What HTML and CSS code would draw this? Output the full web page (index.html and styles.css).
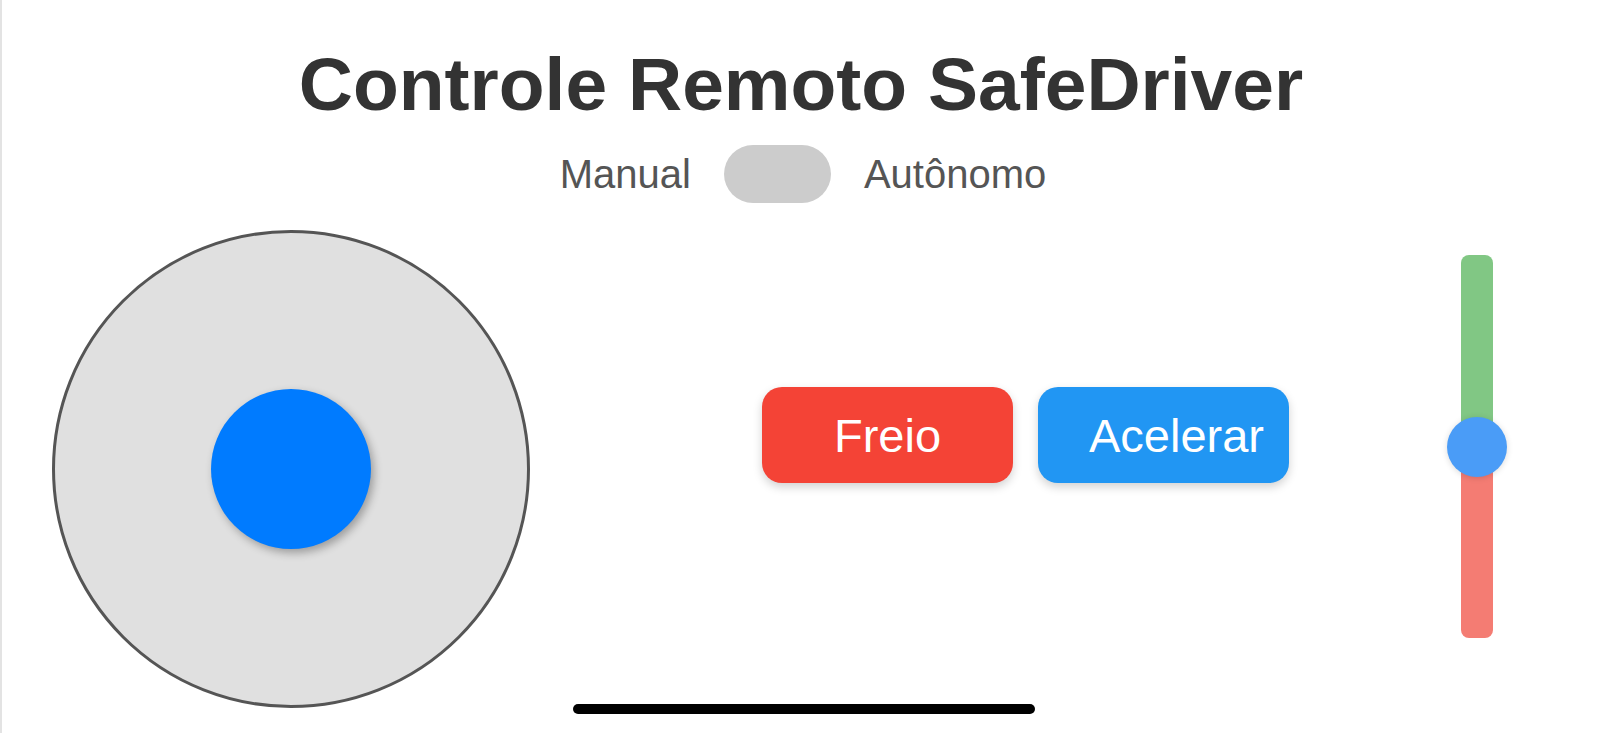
FILE: index.html
```html
<!DOCTYPE html>
<html lang="pt">
<head>
<meta charset="utf-8">
<title>Controle Remoto SafeDriver</title>
<link rel="stylesheet" href="styles.css">
</head>
<body>
<div class="app">
  <h1 class="title">Controle Remoto SafeDriver</h1>
  <div class="mode-row">
    <span class="mode-label">Manual</span>
    <div class="switch"></div>
    <span class="mode-label">Autônomo</span>
  </div>
  <div class="controls">
    <div class="joystick">
      <div class="knob"></div>
    </div>
    <div class="buttons">
      <button class="btn btn-brake">Freio</button>
      <button class="btn btn-accel">Acelerar</button>
    </div>
    <div class="slider">
      <div class="slider-thumb"></div>
    </div>
  </div>
  <div class="home-indicator"></div>
</div>
</body>
</html>
```
FILE: styles.css
```css
html, body {
  margin: 0;
  padding: 0;
  background: #ffffff;
}

body {
  font-family: "Liberation Sans", Arial, sans-serif;
  overflow: hidden;
}

.app {
  position: relative;
  width: 1600px;
  height: 733px;
  box-sizing: border-box;
  border-left: 2px solid #e3e3e3;
  display: flex;
  flex-direction: column;
  align-items: stretch;
}

.title {
  margin: 41px 0 0 0;
  font-size: 75px;
  font-weight: bold;
  line-height: 86px;
  color: #333333;
  text-align: center;
}

.mode-row {
  margin-top: 18px;
  display: flex;
  justify-content: center;
  align-items: center;
  gap: 33px;
  padding-left: 4px;
}

.mode-label {
  font-size: 40px;
  line-height: 46px;
  color: #555555;
}

.switch {
  width: 107px;
  height: 58px;
  border-radius: 29px;
  background: #cccccc;
}

.controls {
  margin-top: 27px;
  display: flex;
  align-items: flex-start;
  padding-left: 50px;
}

.joystick {
  width: 478px;
  height: 478px;
  box-sizing: border-box;
  border: 3px solid #555555;
  border-radius: 50%;
  background: #e0e0e0;
  display: flex;
  align-items: center;
  justify-content: center;
}

.knob {
  width: 160px;
  height: 160px;
  border-radius: 50%;
  background: #007bff;
  box-shadow: 3px 4px 8px rgba(0, 0, 0, 0.3);
}

.buttons {
  margin-left: 232px;
  margin-top: 157px;
  display: flex;
  gap: 25px;
}

.btn {
  width: 251px;
  height: 96px;
  box-sizing: border-box;
  padding: 0 51px;
  border: none;
  border-radius: 20px;
  font-family: "Liberation Sans", Arial, sans-serif;
  font-size: 47px;
  color: #ffffff;
  text-align: center;
  white-space: nowrap;
  box-shadow: 0 4px 10px rgba(0, 0, 0, 0.18);
}

.btn-brake {
  background: #f44336;
}

.btn-accel {
  background: #2196f3;
  text-align: left;
}

.slider {
  position: relative;
  margin-left: 172px;
  margin-top: 25px;
  width: 32px;
  height: 383px;
  border-radius: 8px;
  background: linear-gradient(to bottom, #81c784 0, #81c784 192px, #f47c73 192px, #f47c73 100%);
}

.slider-thumb {
  position: absolute;
  left: -14px;
  top: 162px;
  width: 60px;
  height: 60px;
  border-radius: 50%;
  background: #4a9cf7;
  box-shadow: 0 1px 6px rgba(0, 0, 0, 0.15);
}

.home-indicator {
  position: absolute;
  left: 571px;
  top: 704px;
  width: 462px;
  height: 10px;
  border-radius: 5px;
  background: #000000;
}
```
